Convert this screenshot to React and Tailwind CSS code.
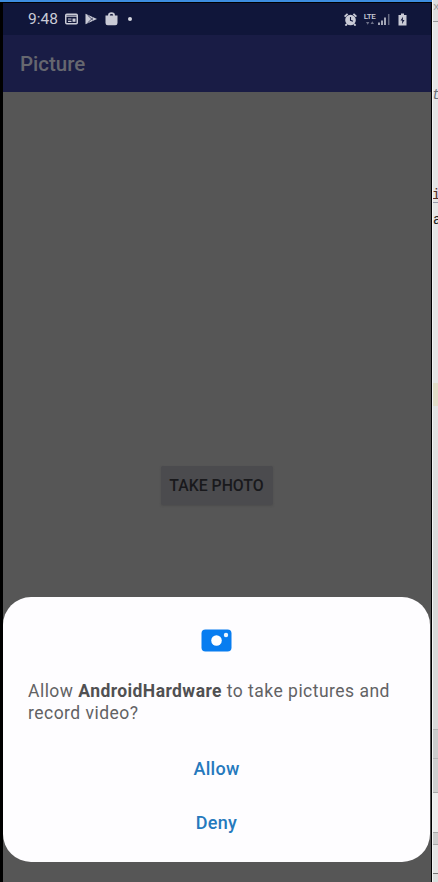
function StatusBar() {
  return (
    <div className="flex h-[32px] shrink-0 items-center bg-[#10163a] pl-[25px] pr-[24px] text-[#c9cbd6]">
      <span className="w-[31px] whitespace-nowrap pt-px text-[15.5px] leading-none">9:48</span>
      <svg className="ml-[6px] h-[12px] w-[13px]" viewBox="0 0 13 12">
        <rect x="0.75" y="1.25" width="11.5" height="9.5" rx="1" fill="none" stroke="currentColor" strokeWidth="1.5" />
        <path d="M1 3.2h11M3 6h3.5M3 8.3h3.5" stroke="currentColor" strokeWidth="1.2" />
        <rect x="7.5" y="5.5" width="3" height="3.3" fill="currentColor" />
      </svg>
      <svg className="ml-[7px] h-[12px] w-[12px]" viewBox="0 0 12 12">
        <path d="M0.5 0.8v10.4L12 6z" fill="currentColor" />
        <path d="M2.5 2l5.5 5.3M2.5 10L8 4.7" stroke="#10163a" strokeWidth="0.7" />
      </svg>
      <svg className="ml-[8px] h-[14px] w-[13px]" viewBox="0 0 13 14">
        <path d="M0.5 3.5h12V11q0 2.2-2.2 2.2H2.7Q0.5 13.2 0.5 11z" fill="currentColor" />
        <path d="M4 4.5V3q0-1.8 2.5-1.8T9 3v1.5" fill="none" stroke="currentColor" strokeWidth="1.8" />
      </svg>
      <span className="ml-[10px] h-[4px] w-[4px] rounded-full bg-[#d5d7e0]" />
      <svg className="ml-auto h-[13px] w-[13px]" viewBox="0 0 13 13">
        <circle cx="6.5" cy="7" r="5.3" fill="currentColor" />
        <path d="M0.6 3.7L3.6 0.8M12.4 3.7L9.4 0.8M3 11l-1.6 1.6M10 11l1.6 1.6" stroke="currentColor" strokeWidth="1.8" />
        <path d="M6.5 4v3.3l2.5 1" fill="none" stroke="#10163a" strokeWidth="1.1" />
      </svg>
      <div className="ml-[6px] flex h-[13px] w-[13px] flex-col items-center">
        <span className="text-[8px] font-medium leading-[8px] tracking-[-0.4px]">LTE</span>
        <svg className="h-[4px] w-[8px]" viewBox="0 0 8 4">
          <path d="M0 1h3.4L1.7 3.8zM4.6 3H8L6.3 0.2z" fill="currentColor" opacity="0.5" />
        </svg>
      </div>
      <svg className="ml-[2px] h-[12px] w-[12px]" viewBox="0 0 12 12">
        <path d="M1 9.5V12M4 7.5V12M7 4.5V12" stroke="currentColor" strokeWidth="1.6" />
        <path d="M10.7 1V12" stroke="currentColor" strokeWidth="1.5" opacity="0.45" />
      </svg>
      <svg className="ml-[8px] h-[13px] w-[9px]" viewBox="0 0 9 13">
        <path d="M3 0.5h3V2h2.5v10.5H0.5V2H3z" fill="currentColor" />
        <path d="M5 3.7L2.5 7.5h1.8L4 11l2.5-4H4.8z" fill="#10163a" />
      </svg>
    </div>
  );
}

function PermissionDialog() {
  return (
    <section className="flex h-[265px] w-[427px] shrink-0 flex-col rounded-[28px] bg-[#fefdff] pt-[32px]">
      <svg className="ml-[198px] h-[23px] w-[31px] shrink-0" viewBox="0 0 31 23">
        <rect x="0.5" y="0.5" width="30" height="22" rx="4" fill="#087df0" />
        <circle cx="15.5" cy="11.5" r="5.3" fill="#fff" />
        <circle cx="25" cy="6" r="2.2" fill="#eef7ff" />
      </svg>
      <p className="ml-[25px] mt-[28px] whitespace-nowrap text-[17.5px] leading-[22px] tracking-[0.48px] text-[#626264]">
        Allow <b className="font-bold tracking-[0.42px] text-[#505052]">AndroidHardware</b> to take pictures and
        <br />
        record video?
      </p>
      <div className="mt-[17px] flex flex-col text-[18px] font-medium tracking-[0.3px] text-[#2579bd]">
        <button className="h-[54px]">Allow</button>
        <button className="h-[54px]">Deny</button>
      </div>
    </section>
  );
}

function EditorEdge() {
  return (
    <aside className="flex w-[5px] shrink-0 flex-col overflow-hidden bg-[#e5e5e5] font-['Liberation_Mono',monospace] text-[14px] text-[#222]">
      <div className="h-[22px] shrink-0 overflow-hidden border-b border-[#999] bg-[#dedede] text-[11px] leading-[14px] text-[#999]">
        x
      </div>
      <div className="mt-[60px] h-[24px] shrink-0 italic leading-[26px] text-[#6d7178]">
        <span className="-ml-px">t</span>
      </div>
      <div className="mt-[79px] h-[18px] shrink-0 border-b border-[#999bab] leading-[20px] text-[#542f28]">
        <span className="-ml-px">i</span>
      </div>
      <div className="mt-[8px] h-[20px] shrink-0 leading-[19px]">a</div>
      <div className="mt-[152px] h-[23px] shrink-0 bg-[#e2ddc8]" />
      <div className="h-[323px] shrink-0 bg-gradient-to-b from-[#e3e3e3] via-[#d9d9d9] to-[#d9d9d9]" />
      <div className="h-[30px] shrink-0 border-y border-[#b5b5b5] bg-[#cccccc]" />
      <div className="h-[34px] shrink-0 border-b border-[#aaa] bg-[#cfcfcf]" />
      <div className="h-[40px] shrink-0 border-b border-[#aaa] bg-[#ececec]" />
      <div className="h-[11px] shrink-0 bg-[#cdcdcd]" />
      <div className="h-[30px] shrink-0 border-y border-b-[#777] border-t-[#aaa] bg-[#e5e5e5]" />
      <div className="grow bg-[#dedede]" />
    </aside>
  );
}

export default function App() {
  return (
    <div className="flex h-[882px] w-[438px] overflow-hidden bg-black font-[Roboto,sans-serif]">
      <div className="flex w-[433px] shrink-0 flex-col border-r border-[#f5f5f5]">
        <div className="h-[2px] shrink-0 bg-[#3d8de0]" />
        <div className="ml-[3px] mr-px mt-px flex w-[428px] grow flex-col bg-[#565656]">
          <StatusBar />
          <header className="flex h-[57px] shrink-0 items-center bg-[#191c45] pl-[17px] pt-px text-[20.5px] font-medium text-[#66676f]">
            Picture
          </header>
          <main className="flex h-[505px] shrink-0 flex-col items-center pt-[374px]">
            <button className="mr-px h-[39px] w-[112px] whitespace-nowrap rounded-[2px] bg-[#4b4b4e] pt-px text-[15.8px] font-medium text-[#19191c] shadow-[0_1px_2px_#4c4c4c]">
              TAKE PHOTO
            </button>
          </main>
          <PermissionDialog />
        </div>
      </div>
      <EditorEdge />
    </div>
  );
}
